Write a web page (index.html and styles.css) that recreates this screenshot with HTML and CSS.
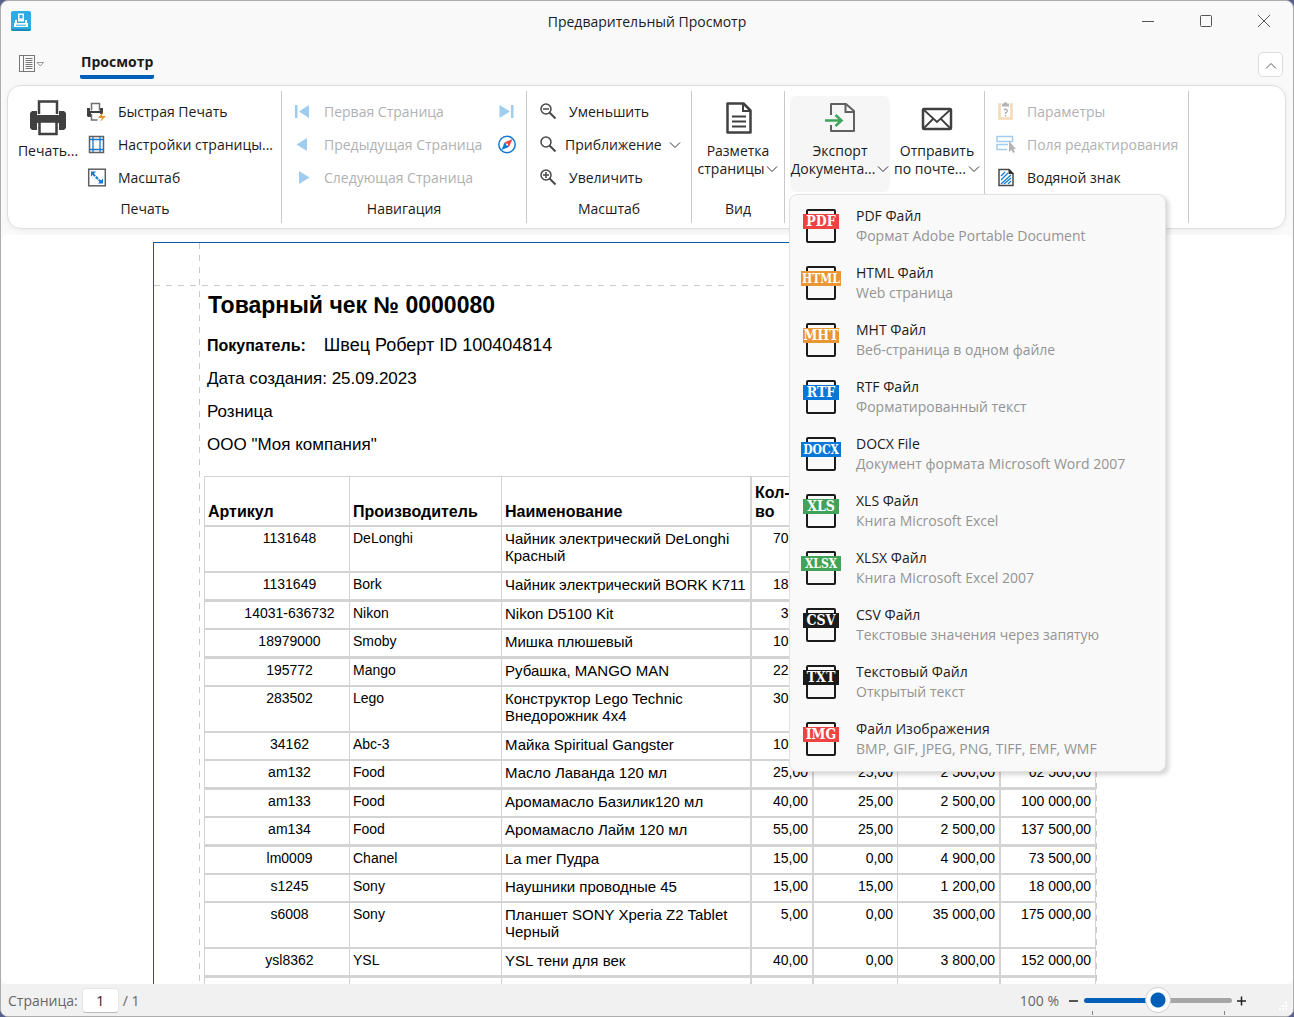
FILE: index.html
```html
<!DOCTYPE html>
<html lang="ru">
<head>
    <meta charset="UTF-8">
    <meta name="viewport" content="width=device-width, initial-scale=1.0">
    <title>Предварительный Просмотр</title>
    <link rel="stylesheet" href="styles.css">
</head>
<body>
    <div class="window">
        <header class="title-bar">
            <svg class="app-icon" width="20" height="20" viewBox="0 0 20 20">
                <rect width="20" height="20" rx="2" fill="#2cabe6"/>
                <path d="M0 18h20a2 2 0 0 1-2 2H2a2 2 0 0 1-2-2z" fill="#1c88bd"/>
                <path d="M7 2.500h6v8H7z" fill="#fff"/>
                <path d="M8.500 4h3v3.500h-3z" fill="#2cabe6"/>
                <path d="M4 9h2v3h8V9h2v3h1v4H3v-4h1z" fill="#fff"/>
                <path d="M5 14.200h10" stroke="#2cabe6"/>
            </svg>
            <h1 class="window-title">Предварительный Просмотр</h1>
            <div class="window-buttons">
                <button type="button" aria-label="Свернуть"><svg width="12" height="12" viewBox="0 0 12 12"><path d="M0 6.500h12"/></svg></button>
                <button type="button" aria-label="Развернуть"><svg width="12" height="12" viewBox="0 0 12 12"><rect x=".5" y=".5" width="11" height="11" rx="1"/></svg></button>
                <button type="button" aria-label="Закрыть"><svg width="12" height="12" viewBox="0 0 12 12"><path d="M0 0l12 12M12 0L0 12"/></svg></button>
            </div>
        </header>

        <nav class="tab-bar">
            <button type="button" class="app-menu" aria-label="Меню">
                <svg width="26" height="18" viewBox="0 0 26 18" fill="none" stroke="#777">
                    <rect x=".5" y=".5" width="15" height="16"/>
                    <path d="M4.500 1v15M6.500 3.500h7M6.500 5.500h7M6.500 7.500h7M6.500 9.500h7M6.500 11.500h7M6.500 13.500h7"/>
                    <path d="M18 7.500h6.500l-3.200 3.500z" stroke="#999"/>
                </svg>
            </button>
            <button type="button" class="tab">Просмотр</button>
            <button type="button" class="collapse" aria-label="Свернуть ленту"><svg width="12" height="8" viewBox="0 0 12 8"><path d="M1 6.500l5-5 5 5"/></svg></button>
        </nav>

        <section class="ribbon">
            <div class="group group-print">
                <div class="group-body">
                    <button type="button" class="large">
                        <svg width="36" height="36" viewBox="0 0 36 36">
                            <path d="M2 11h5v4h22v-4h5l2 2v15l-2 2h-5v-7H7v7H2l-2-2V13z" fill="#404040"/>
                            <path d="M9 14V1.500h18V14M9.500 21.500h17v12.500h-17z" fill="#fff" stroke="#404040" stroke-width="2.500"/>
                        </svg>
                        <span>Печать...</span>
                    </button>
                    <div class="stack">
                        <button type="button" class="small">
                            <svg width="20" height="20" viewBox="0 0 20 20">
                                <path d="M0 6h3v3h10V6h3v6h-3v-1H4v4H1l-1-1z" fill="#404040"/>
                                <path d="M4.500 8.500v-7h8v7M4.500 12v6h6" fill="none" stroke="#707070" stroke-width="1.500"/>
                                <path d="M16 10l-5 6h4l-2 4 6-6h-4z" fill="#eb912b"/>
                            </svg>
                            <span>Быстрая Печать</span>
                        </button>
                        <button type="button" class="small">
                            <svg width="20" height="20" viewBox="0 0 20 20" fill="none">
                                <rect x="2.500" y="1.500" width="14" height="16" stroke="#606060" stroke-width="1.500"/>
                                <path d="M6 2v15M13 2v15M3 4.500h13M3 14.500h13" stroke="#1079d5" stroke-width="1.300"/>
                            </svg>
                            <span>Настройки страницы...</span>
                        </button>
                        <button type="button" class="small">
                            <svg width="20" height="20" viewBox="0 0 20 20">
                                <rect x="1.700" y="1.200" width="16.600" height="16.600" fill="none" stroke="#606060" stroke-width="1.500"/>
                                <path d="M6 6l8 8" stroke="#1079d5" stroke-width="2" stroke-dasharray="3 1"/>
                                <path d="M4 3.500h5l-5 5zM16 15.500h-5l5-5z" fill="#1079d5"/>
                            </svg>
                            <span>Масштаб</span>
                        </button>
                    </div>
                </div>
                <div class="caption">Печать</div>
            </div>

            <div class="group group-nav">
                <div class="group-body">
                    <div class="stack">
                        <button type="button" class="small" disabled>
                            <svg width="20" height="20" viewBox="0 0 20 20" fill="#9fcdf0"><path d="M2 3h2.500v13H2zM16 3v13L6 9.500z"/></svg>
                            <span>Первая Страница</span>
                        </button>
                        <button type="button" class="small" disabled>
                            <svg width="20" height="20" viewBox="0 0 20 20" fill="#9fcdf0"><path d="M14 3v13L3.500 9.500z"/></svg>
                            <span>Предыдущая Страница</span>
                        </button>
                        <button type="button" class="small" disabled>
                            <svg width="20" height="20" viewBox="0 0 20 20" fill="#9fcdf0"><path d="M6 3v13l10.500-6.500z"/></svg>
                            <span>Следующая Страница</span>
                        </button>
                    </div>
                    <div class="stack stack-end">
                        <button type="button" class="small" aria-label="Последняя Страница" disabled>
                            <svg width="20" height="20" viewBox="0 0 20 20" fill="#9fcdf0"><path d="M14 3h2.500v13H14zM2.500 3v13l10.500-6.500z"/></svg>
                        </button>
                        <button type="button" class="small" aria-label="Обзор">
                            <svg width="20" height="20" viewBox="0 0 20 20">
                                <circle cx="10" cy="9.500" r="8.200" fill="#fff" stroke="#1079d5" stroke-width="1.500"/>
                                <path d="M15.500 4l-3.500 8-4.500-4.500z" fill="#ef4343"/>
                                <path d="M4.500 15l3-7.500L12 12z" fill="#1079d5"/>
                                <circle cx="10" cy="9.500" r="1" fill="#fff"/>
                            </svg>
                        </button>
                    </div>
                </div>
                <div class="caption">Навигация</div>
            </div>

            <div class="group group-zoom">
                <div class="group-body">
                    <div class="stack">
                        <button type="button" class="small">
                            <svg width="20" height="20" viewBox="0 0 20 20" fill="none" stroke="#484848" stroke-width="1.500"><circle cx="8" cy="7" r="5"/><path d="M5 7h6"/><path d="M11.500 10.500l6 6" stroke-width="2"/></svg>
                            <span>Уменьшить</span>
                        </button>
                        <button type="button" class="small tight">
                            <svg width="20" height="20" viewBox="0 0 20 20" fill="none" stroke="#484848" stroke-width="1.500"><circle cx="8" cy="7" r="5"/><path d="M11.500 10.500l6 6" stroke-width="2"/></svg>
                            <span>Приближение</span>
                            <svg class="arrow" width="12" height="8" viewBox="0 0 12 8"><path d="M1 1.500l5 5 5-5"/></svg>
                        </button>
                        <button type="button" class="small">
                            <svg width="20" height="20" viewBox="0 0 20 20" fill="none" stroke="#484848" stroke-width="1.500"><circle cx="8" cy="7" r="5"/><path d="M5 7h6M8 4v6"/><path d="M11.500 10.500l6 6" stroke-width="2"/></svg>
                            <span>Увеличить</span>
                        </button>
                    </div>
                </div>
                <div class="caption">Масштаб</div>
            </div>

            <div class="group group-view">
                <div class="group-body">
                    <button type="button" class="large">
                        <svg width="36" height="36" viewBox="0 0 36 36" fill="none" stroke="#404040" stroke-width="2.500">
                            <path d="M7.500 3.500h16l7 7v22h-23z" stroke-linejoin="round"/>
                            <path d="M23 3v8h7.500M12 16.500h14M12 21.500h14M12 26.500h14" stroke-width="2"/>
                        </svg>
                        <span>Разметка<br>страницы<svg class="arrow" width="12" height="8" viewBox="0 0 12 8"><path d="M1 1.500l5 5 5-5"/></svg></span>
                    </button>
                </div>
                <div class="caption">Вид</div>
            </div>

            <div class="group group-export">
                <div class="group-body">
                    <div class="dropdown">
                        <button type="button" class="large open" aria-expanded="true">
                            <svg width="36" height="36" viewBox="0 0 36 36" fill="none" stroke="#606060" stroke-width="2">
                                <path d="M9 15V4h15l8 7v20H9v-6" stroke-linejoin="round"/>
                                <path d="M23.500 4v8H32" />
                                <path d="M3 20.500h16M13.500 15l6 5.500-6 5.500" stroke="#3fa65b" stroke-width="2.500"/>
                            </svg>
                            <span>Экспорт<br>Документа...<svg class="arrow" width="12" height="8" viewBox="0 0 12 8"><path d="M1 1.500l5 5 5-5"/></svg></span>
                        </button>
                        <div class="menu" role="menu">
                            <button type="button" class="menu-item" role="menuitem">
                                <svg class="file-icon" width="40" height="36" viewBox="0 0 40 36"><rect class="sheet" x="6" y="2" width="28" height="32" rx="1"/><rect x="2" y="6" width="36" height="15" fill="#ef4343"/><text x="20" y="18">PDF</text></svg>
                                <span class="menu-text"><span class="menu-name">PDF Файл</span><span class="menu-note">Формат Adobe Portable Document</span></span>
                            </button>
                            <button type="button" class="menu-item" role="menuitem">
                                <svg class="file-icon" width="40" height="36" viewBox="0 0 40 36"><rect class="sheet" x="6" y="2" width="28" height="32" rx="1"/><rect x="0" y="6" width="40" height="15" fill="#eb9634"/><text class="long" x="20" y="18">HTML</text></svg>
                                <span class="menu-text"><span class="menu-name">HTML Файл</span><span class="menu-note">Web страница</span></span>
                            </button>
                            <button type="button" class="menu-item" role="menuitem">
                                <svg class="file-icon" width="40" height="36" viewBox="0 0 40 36"><rect class="sheet" x="6" y="2" width="28" height="32" rx="1"/><rect x="2" y="6" width="36" height="15" fill="#eb9634"/><text x="20" y="18">MHT</text></svg>
                                <span class="menu-text"><span class="menu-name">MHT Файл</span><span class="menu-note">Веб-страница в одном файле</span></span>
                            </button>
                            <button type="button" class="menu-item" role="menuitem">
                                <svg class="file-icon" width="40" height="36" viewBox="0 0 40 36"><rect class="sheet" x="6" y="2" width="28" height="32" rx="1"/><rect x="2" y="6" width="36" height="15" fill="#0877d7"/><text x="20" y="18">RTF</text></svg>
                                <span class="menu-text"><span class="menu-name">RTF Файл</span><span class="menu-note">Форматированный текст</span></span>
                            </button>
                            <button type="button" class="menu-item" role="menuitem">
                                <svg class="file-icon" width="40" height="36" viewBox="0 0 40 36"><rect class="sheet" x="6" y="2" width="28" height="32" rx="1"/><rect x="0" y="6" width="40" height="15" fill="#0877d7"/><text class="long" x="20" y="18">DOCX</text></svg>
                                <span class="menu-text"><span class="menu-name">DOCX File</span><span class="menu-note">Документ формата Microsoft Word 2007</span></span>
                            </button>
                            <button type="button" class="menu-item" role="menuitem">
                                <svg class="file-icon" width="40" height="36" viewBox="0 0 40 36"><rect class="sheet" x="6" y="2" width="28" height="32" rx="1"/><rect x="2" y="6" width="36" height="15" fill="#41a35a"/><text x="20" y="18">XLS</text></svg>
                                <span class="menu-text"><span class="menu-name">XLS Файл</span><span class="menu-note">Книга Microsoft Excel</span></span>
                            </button>
                            <button type="button" class="menu-item" role="menuitem">
                                <svg class="file-icon" width="40" height="36" viewBox="0 0 40 36"><rect class="sheet" x="6" y="2" width="28" height="32" rx="1"/><rect x="0" y="6" width="40" height="15" fill="#41a35a"/><text class="long" x="20" y="18">XLSX</text></svg>
                                <span class="menu-text"><span class="menu-name">XLSX Файл</span><span class="menu-note">Книга Microsoft Excel 2007</span></span>
                            </button>
                            <button type="button" class="menu-item" role="menuitem">
                                <svg class="file-icon" width="40" height="36" viewBox="0 0 40 36"><rect class="sheet" x="6" y="2" width="28" height="32" rx="1"/><rect x="2" y="6" width="36" height="15" fill="#1b1b1b"/><text x="20" y="18">CSV</text></svg>
                                <span class="menu-text"><span class="menu-name">CSV Файл</span><span class="menu-note">Текстовые значения через запятую</span></span>
                            </button>
                            <button type="button" class="menu-item" role="menuitem">
                                <svg class="file-icon" width="40" height="36" viewBox="0 0 40 36"><rect class="sheet" x="6" y="2" width="28" height="32" rx="1"/><rect x="2" y="6" width="36" height="15" fill="#1b1b1b"/><text x="20" y="18">TXT</text></svg>
                                <span class="menu-text"><span class="menu-name">Текстовый Файл</span><span class="menu-note">Открытый текст</span></span>
                            </button>
                            <button type="button" class="menu-item" role="menuitem">
                                <svg class="file-icon" width="40" height="36" viewBox="0 0 40 36"><rect class="sheet" x="6" y="2" width="28" height="32" rx="1"/><rect x="2" y="6" width="36" height="15" fill="#ef4343"/><text x="20" y="18">IMG</text></svg>
                                <span class="menu-text"><span class="menu-name">Файл Изображения</span><span class="menu-note">BMP, GIF, JPEG, PNG, TIFF, EMF, WMF</span></span>
                            </button>
                        </div>
                    </div>
                    <button type="button" class="large">
                        <svg width="36" height="36" viewBox="0 0 36 36" fill="none" stroke="#404040" stroke-width="2.500">
                            <rect x="4" y="9" width="28" height="20" rx="1"/>
                            <path d="M5 10l13 12 13-12M5 28l9-9M31 28l-9-9" stroke-width="1.800"/>
                        </svg>
                        <span>Отправить<br>по почте...<svg class="arrow" width="12" height="8" viewBox="0 0 12 8"><path d="M1 1.500l5 5 5-5"/></svg></span>
                    </button>
                </div>
            </div>

            <div class="group group-doc">
                <div class="group-body">
                    <div class="stack">
                        <button type="button" class="small" disabled>
                            <svg width="20" height="20" viewBox="0 0 20 20">
                                <path d="M5 2.500H3.500v14h12v-14H14" fill="none" stroke="#f6d9b5" stroke-width="2.500"/>
                                <path d="M6 1.500h2a1.500 1.500 0 0 1 3 0h2v3H6z" fill="#b5b5b5"/>
                                <path d="M8 8q2-1.500 3 0t-1.500 3v1M9.500 13v1.500" fill="none" stroke="#aaa" stroke-width="1.300"/>
                            </svg>
                            <span>Параметры</span>
                        </button>
                        <button type="button" class="small" disabled>
                            <svg width="20" height="20" viewBox="0 0 20 20">
                                <path d="M16.500 7V1.500H1v5h15.500M12 9.500H1v5h10" fill="none" stroke="#a3cdee" stroke-width="1.500"/>
                                <path d="M13 6v11l2.500-2 1.500 3 2-1-1.500-3H20z" fill="#b5b5b5"/>
                            </svg>
                            <span>Поля редактирования</span>
                        </button>
                        <button type="button" class="small">
                            <svg width="20" height="20" viewBox="0 0 20 20">
                                <path d="M3 1.500h10l4 4v12H3z" fill="none" stroke="#484848" stroke-width="1.500"/>
                                <path d="M12.500 1v5H18z" fill="#303030"/>
                                <path d="M5 8l4-4M5 12l7-7M5 16l10-9M8 16l7-6M12 16l3-3" stroke="#1079d5" stroke-width="1.200"/>
                            </svg>
                            <span>Водяной знак</span>
                        </button>
                    </div>
                </div>
            </div>
        </section>

        <main class="viewer">
            <article class="page">
                <h2 class="receipt-title">Товарный чек № 0000080</h2>
                <p class="buyer"><b>Покупатель:</b><span>Швец Роберт ID 100404814</span></p>
                <p>Дата создания: 25.09.2023</p>
                <p>Розница</p>
                <p>ООО "Моя компания"</p>

                <table class="goods">
                    <colgroup>
                        <col class="col-code"><col class="col-maker"><col class="col-name"><col class="col-count"><col class="col-discount"><col class="col-price"><col class="col-total">
                    </colgroup>
                    <thead>
                        <tr><th>Артикул</th><th>Производитель</th><th>Наименование</th><th>Кол-во</th><th></th><th></th><th></th></tr>
                    </thead>
                    <tbody>
                        <tr class="tall"><td>1131648</td><td>DeLonghi</td><td>Чайник электрический DeLonghi Красный</td><td>70,00</td><td></td><td></td><td></td></tr>
                        <tr class="thick"><td>1131649</td><td>Bork</td><td>Чайник электрический BORK K711</td><td>18,00</td><td></td><td></td><td></td></tr>
                        <tr><td>14031-636732</td><td>Nikon</td><td>Nikon D5100 Kit</td><td>3,00</td><td></td><td></td><td></td></tr>
                        <tr class="thick"><td>18979000</td><td>Smoby</td><td>Мишка плюшевый</td><td>10,00</td><td></td><td></td><td></td></tr>
                        <tr><td>195772</td><td>Mango</td><td>Рубашка, MANGO MAN</td><td>22,00</td><td></td><td></td><td></td></tr>
                        <tr class="tall"><td>283502</td><td>Lego</td><td>Конструктор Lego Technic Внедорожник 4x4</td><td>30,00</td><td></td><td></td><td></td></tr>
                        <tr><td>34162</td><td>Abc-3</td><td>Майка Spiritual Gangster</td><td>10,00</td><td></td><td></td><td></td></tr>
                        <tr class="thick"><td>am132</td><td>Food</td><td>Масло Лаванда 120 мл</td><td>25,00</td><td>25,00</td><td>2 500,00</td><td>62 500,00</td></tr>
                        <tr><td>am133</td><td>Food</td><td>Аромамасло Базилик120 мл</td><td>40,00</td><td>25,00</td><td>2 500,00</td><td>100 000,00</td></tr>
                        <tr class="thick"><td>am134</td><td>Food</td><td>Аромамасло Лайм 120 мл</td><td>55,00</td><td>25,00</td><td>2 500,00</td><td>137 500,00</td></tr>
                        <tr><td>lm0009</td><td>Chanel</td><td>La mer Пудра</td><td>15,00</td><td>0,00</td><td>4 900,00</td><td>73 500,00</td></tr>
                        <tr><td>s1245</td><td>Sony</td><td>Наушники проводные 45</td><td>15,00</td><td>15,00</td><td>1 200,00</td><td>18 000,00</td></tr>
                        <tr class="tall"><td>s6008</td><td>Sony</td><td>Планшет SONY Xperia Z2 Tablet Черный</td><td>5,00</td><td>0,00</td><td>35 000,00</td><td>175 000,00</td></tr>
                        <tr class="thick"><td>ysl8362</td><td>YSL</td><td>YSL тени для век</td><td>40,00</td><td>0,00</td><td>3 800,00</td><td>152 000,00</td></tr>
                        <tr><td></td><td></td><td></td><td></td><td></td><td></td><td></td></tr>
                    </tbody>
                </table>
            </article>
        </main>

        <footer class="status-bar">
            <label for="pageNumber">Страница:</label>
            <input type="text" class="page-number" id="pageNumber" value="1">
            <span>/ 1</span>
            <div class="zoom">
                <label for="zoomRange">100 %</label>
                <button type="button" aria-label="Уменьшить"><svg width="10" height="10" viewBox="0 0 10 10"><path d="M0 5h9"/></svg></button>
                <input type="range" class="zoom-range" id="zoomRange" min="0" max="100" value="50">
                <button type="button" aria-label="Увеличить"><svg width="10" height="10" viewBox="0 0 10 10"><path d="M0 5h9M4.500 .5v9"/></svg></button>
            </div>
            <svg class="grip" width="10" height="10" viewBox="0 0 10 10" fill="#fff"><path d="M6 0h2v2H6zM3 3h2v2H3zM6 3h2v2H6zM0 6h2v2H0zM3 6h2v2H3zM6 6h2v2H6z"/></svg>
        </footer>
    </div>
</body>
</html>
```

FILE: styles.css
```css
* {
    box-sizing: border-box;
}

body {
    margin: 0;
    height: 100vh;
    background: #56608a;
    font-family: "Open Sans", "Noto Sans", sans-serif;
    font-size: 14px;
    color: #1b1b1b;
}

button {
    font: inherit;
    color: inherit;
    background: none;
    border: none;
    padding: 0;
    margin: 0;
}

svg {
    flex: none;
}

.window {
    height: 100%;
    display: flex;
    flex-direction: column;
    background: #f9f9f9;
    border: 1px solid #adadad;
    border-radius: 8px;
    overflow: hidden;
}

/* title bar */
.title-bar {
    display: grid;
    grid-template-columns: 1fr auto 1fr;
    align-items: center;
    height: 40px;
    flex: none;
}

.app-icon {
    margin-left: 10px;
}

.window-title {
    margin: 0;
    font-size: 14px;
    font-weight: 400;
}

.window-buttons {
    display: flex;
    justify-content: flex-end;
}

.window-buttons button {
    width: 58px;
    height: 40px;
}

.window-buttons svg,
.collapse svg {
    fill: none;
    stroke: #555;
}

/* tabs */
.tab-bar {
    display: flex;
    align-items: center;
    height: 44px;
    flex: none;
    padding: 2px 10px 0 18px;
}

.app-menu {
    display: flex;
}

.tab {
    height: 30px;
    margin-left: 35px;
    padding: 0 1px;
    font-weight: 700;
    background: linear-gradient(#005fb8, #005fb8) 0 100% / 100% 4px no-repeat;
    border-radius: 2px;
    line-height: 26px;
    padding-bottom: 4px;
}

.collapse {
    width: 25px;
    height: 25px;
    margin-left: auto;
    background: white;
    border: 1px solid #dcdcdc;
    border-radius: 5px;
}

/* ribbon */
.ribbon {
    display: flex;
    flex: none;
    height: 144px;
    margin: 0 7px 0 6px;
    padding: 5px 0;
    background: white;
    border: 1px solid #dedede;
    border-radius: 14px;
    box-shadow: 0 1px 5px rgba(0,0,0,0.06);
}

.group {
    display: flex;
    flex-direction: column;
    flex: none;
    border-right: 1px solid #c9c9c9;
}

.group-body {
    display: flex;
    flex: 1;
    padding-top: 4px;
}

.caption {
    height: 28px;
    line-height: 28px;
    text-align: center;
}

.group-print {
    width: 274px;
    padding-left: 1px;
}

.group-nav {
    width: 245px;
    padding-left: 11px;
}

.group-zoom {
    width: 165px;
    padding-left: 11px;
}

.group-view {
    width: 93px;
}

.group-export {
    width: 200px;
    padding-left: 5px;
}

.group-doc {
    width: 204px;
    padding-left: 11px;
}

.group-nav .caption,
.group-zoom .caption {
    margin-left: -11px;
}

.stack {
    display: flex;
    flex-direction: column;
}

.stack-end {
    margin-left: auto;
    margin-right: 9px;
}

.small {
    display: flex;
    align-items: center;
    gap: 11px;
    height: 33px;
    white-space: nowrap;
}

.small.tight {
    gap: 7px;
}

.small:disabled {
    color: #b1b1b1;
}

.large {
    display: flex;
    flex-direction: column;
    align-items: center;
    gap: 6px;
    height: 96px;
    margin-top: 1px;
    padding-top: 4px;
    line-height: 18px;
    white-space: nowrap;
}

.group-print .large {
    width: 78px;
}

.group-view .large {
    width: 92px;
}

.group-export .large {
    width: 94px;
}

.group-export .large.open {
    width: 100px;
    background: #f6f6f6;
    border-radius: 6px;
}

.arrow {
    fill: none;
    stroke: #333;
}

.large .arrow {
    margin-left: 2px;
    vertical-align: 1px;
}

/* export menu */
.dropdown {
    position: relative;
}

.menu {
    position: absolute;
    z-index: 10;
    top: 99px;
    left: -1px;
    width: 377px;
    padding: 2px 0 4px;
    background: #f9f9f9;
    border: 1px solid #e2e2e2;
    border-radius: 8px;
    box-shadow: 3px 3px 4px rgba(0,0,0,0.16);
}

.menu-item {
    display: flex;
    align-items: center;
    gap: 15px;
    width: 100%;
    height: 57px;
    padding-left: 11px;
    text-align: left;
    white-space: nowrap;
}

.menu-text {
    display: flex;
    flex-direction: column;
    line-height: 20px;
}

.menu-note {
    color: #949494;
}

.file-icon .sheet {
    fill: none;
    stroke: #1b1b1b;
    stroke-width: 2;
}

.file-icon text {
    fill: white;
    font-family: "DejaVu Serif Condensed", "DejaVu Serif", serif;
    font-size: 14px;
    font-weight: 700;
    text-anchor: middle;
}

.file-icon .long {
    font-size: 12px;
}

/* document */
.viewer {
    flex: 1;
    min-height: 0;
    margin-top: 6px;
    padding-top: 7px;
    background: white;
    border-radius: 8px;
    overflow: hidden;
}

.page {
    width: 988px;
    min-height: 1400px;
    margin: 0 auto;
    padding: 48px 45px 0 50px;
    border-top: 1px solid #0a5aa8;
    border-left: 1px solid #0a5aa8;
    background:
        repeating-linear-gradient(to bottom, #c9c9c9 0 6px, transparent 6px 12px) 45px 0 / 1px 100% no-repeat,
        repeating-linear-gradient(to bottom, #c9c9c9 0 6px, transparent 6px 12px) 942px 0 / 1px 100% no-repeat,
        repeating-linear-gradient(to right, #c9c9c9 0 6px, transparent 6px 12px) 0 42px / 100% 1px no-repeat;
    font-family: "Liberation Sans", Arial, sans-serif;
    color: black;
}

.page p {
    margin: 0 0 0 3px;
    font-size: 17px;
    line-height: 33px;
}

.receipt-title {
    margin: 0 0 10px 4px;
    font-size: 23px;
    line-height: 28px;
}

.buyer {
    display: flex;
    gap: 18px;
}

.page .buyer b {
    font-size: 16px;
}

.page .buyer span {
    font-size: 18px;
}

.goods {
    width: 892px;
    margin-top: 15px;
    table-layout: fixed;
    border-collapse: separate;
    border-spacing: 0;
    border-top: 1px solid #d3d3d3;
    border-left: 1px solid #d3d3d3;
    font-size: 14px;
    line-height: 17px;
}

.col-code {
    width: 145px;
}

.col-maker {
    width: 152px;
}

.col-name {
    width: 250px;
}

.col-count {
    width: 62px;
}

.col-discount {
    width: 84px;
}

.col-price {
    width: 103px;
}

.goods th,
.goods td {
    height: 28px;
    padding: 3px 3px 0;
    border-right: 1px solid #d3d3d3;
    border-bottom: 2px solid #d3d3d3;
    text-align: left;
    vertical-align: top;
}

.goods th {
    height: 50px;
    padding-bottom: 4px;
    font-size: 16px;
    line-height: 19px;
    vertical-align: bottom;
}

.goods td:nth-child(1) {
    padding-left: 28px;
    text-align: center;
}

.goods td:nth-child(3) {
    font-size: 15px;
}

.goods td:nth-child(n+4) {
    padding-right: 4px;
    text-align: right;
}

.goods th:nth-child(3),
.goods td:nth-child(3),
.goods th:nth-child(4),
.goods td:nth-child(4),
.goods th:nth-child(6),
.goods td:nth-child(6) {
    border-right-width: 2px;
}

.goods .thick td {
    height: 29px;
    border-bottom-width: 3px;
}

.goods .tall td {
    height: 46px;
}

/* status bar */
.status-bar {
    display: flex;
    align-items: center;
    flex: none;
    gap: 4px;
    height: 32px;
    padding: 1px 4px 0 7px;
    background: #f1f1f1;
    color: #666;
}

.page-number {
    width: 37px;
    height: 25px;
    padding: 0;
    font: inherit;
    color: #1b1b1b;
    text-align: center;
    border: 1px solid #e6e6e6;
    border-bottom-color: #bbb;
    border-radius: 4px;
}

.zoom {
    display: flex;
    align-items: center;
    gap: 5px;
    margin-left: auto;
}

.zoom label {
    margin-right: 5px;
}

.zoom button {
    display: flex;
}

.zoom button svg {
    fill: none;
    stroke: #222;
    stroke-width: 1.5;
}

.grip {
    align-self: flex-end;
    margin: 0 0 4px 28px;
}

.zoom-range {
    -webkit-appearance: none;
    appearance: none;
    width: 148px;
    height: 28px;
    margin: 0;
    background:
        linear-gradient(#888, #888) 8px 100% / 1px 4px no-repeat,
        linear-gradient(#888, #888) 140px 100% / 1px 4px no-repeat;
}

.zoom-range::-webkit-slider-runnable-track {
    height: 5px;
    border-radius: 3px;
    background: linear-gradient(to right, #005fb8 50%, #a6a6a6 50%);
}

.zoom-range::-webkit-slider-thumb {
    -webkit-appearance: none;
    width: 26px;
    height: 26px;
    margin-top: -11px;
    border: 1px solid #d0d0d0;
    border-radius: 50%;
    background: radial-gradient(circle, #005fb8 7px, white 8px);
}
```
